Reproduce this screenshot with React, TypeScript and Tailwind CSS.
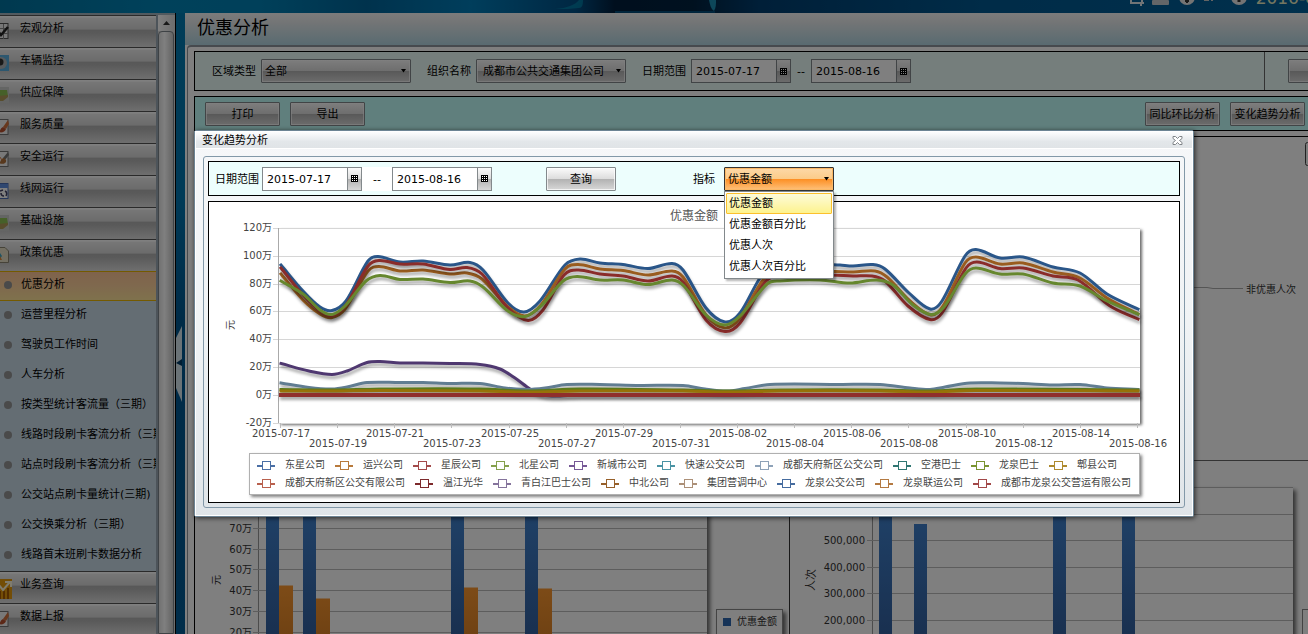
import { useState } from "react";
import type { ReactNode } from "react";

type Point = [number, number];

const CONTROL =
  "border border-[#83898c] rounded-[1px] shadow-[inset_0_0_0_1px_rgba(255,255,255,0.7)]";
const SILVER =
  "bg-[linear-gradient(to_bottom,#fbfbfb_0%,#dcdcdc_50%,#b2b2b2_51%,#d8d8d8_100%)]";

/* ---------- shared controls ---------- */

function Caret() {
  return (
    <svg className="pointer-events-none absolute right-1 top-[10px]" width="7" height="4" viewBox="0 0 7 4">
      <path d="M1 0h5L3.500 3.500z" fill="#000" />
    </svg>
  );
}

function SilverButton({ children, className = "" }: { children?: ReactNode; className?: string }) {
  return (
    <button type="button" className={`h-6 shrink-0 whitespace-nowrap pt-0.5 text-center ${CONTROL} ${SILVER} ${className}`}>
      {children}
    </button>
  );
}

function SilverSelect({ id, options, pad }: { id: string; options: string[]; pad: string }) {
  return (
    <div className="relative h-6 w-[150px] shrink-0">
      <select id={id} className={`h-full w-full appearance-none pt-0.5 ${pad} ${CONTROL} ${SILVER}`}>
        {options.map((o) => (
          <option key={o}>{o}</option>
        ))}
      </select>
      <Caret />
    </div>
  );
}

function DateField({ id, value, label }: { id: string; value: string; label: string }) {
  return (
    <div className="flex h-6 w-[100px] shrink-0 border border-[#83898c] bg-white">
      <input id={id} aria-label={label} defaultValue={value} className="w-[84px] min-w-0 bg-transparent pl-1 pt-0.5 outline-none" />
      <button
        type="button"
        aria-label="选择日期"
        className="flex flex-1 items-center justify-center border-l border-[#83898c] bg-[linear-gradient(to_bottom,#fbfbfb_0%,#dcdcdc_50%,#b2b2b2_51%,#d8d8d8_100%)]"
      >
        <svg width="7" height="7" viewBox="0 0 7 7" shapeRendering="crispEdges">
          <rect width="7" height="7" fill="#000" />
          <path d="M1 1h1v1H1zM3 1h1v1H3zM5 1h1v1H5zM1 3h1v1H1zM3 3h1v1H3zM5 3h1v1H5zM1 5h1v1H1zM3 5h1v1H3zM5 5h1v1H5z" fill="#fff" />
        </svg>
      </button>
    </div>
  );
}

/* ---------- top banner ---------- */

function Banner() {
  return (
    <header className="relative flex h-[13px] shrink-0 items-start justify-end overflow-hidden bg-[linear-gradient(to_right,#00729f_0%,#0083b6_12%,#0080b4_20%,#00659a_28%,#007cb8_36%,#004f86_44%,#001e3c_47%,#00223f_53%,#003e70_58%,#005890_75%,#00609a_100%)]">
      <svg className="absolute left-[555px] top-0" width="180" height="13" viewBox="0 0 180 13">
        <path d="M0 9C12 8 20 5 24 0h4c0 5-1 8-4 8-8 1-15 1-24 1z" fill="#0095b8" opacity=".6" />
        <path d="M154 0c1 5 2 9 5 11 2-3 2-7 2-11z" fill="#1b8fb5" />
        <path d="M60 12h100" stroke="#014a78" strokeWidth="2" />
      </svg>
      <svg className="absolute right-0 top-0" width="188" height="13" viewBox="0 0 188 13">
        <path d="M11 0v3h11M22 0v3M19 3h5M21 3v3" stroke="#e3e9ec" strokeWidth="2" fill="none" />
        <rect x="32" y="0" width="17" height="5" rx="1" fill="#c9cdd0" />
        <circle cx="67" cy="-3" r="8" fill="#e8e8e8" />
        <path d="M67 0v3M65 1h4" stroke="#333" strokeWidth="2" />
        <path d="M84 0h5M91 0h2" stroke="#c8c8c8" strokeWidth="2" />
        <circle cx="119" cy="-3" r="8" fill="#e8e8e8" />
        <path d="M119-2v4" stroke="#333" strokeWidth="3" />
      </svg>
      <span className="absolute left-[96%] top-0 -mt-[11px] whitespace-nowrap text-[17px] leading-[18px] text-[#e9edc0]">2016-08-17</span>
    </header>
  );
}

/* ---------- sidebar ---------- */

const ICONS: Record<string, ReactNode> = {
  check: (
    <>
      <rect x="-7" y=".5" width="15" height="15" fill="#eee" stroke="#555" />
      <path d="M3.500 1v15M-1 5.500h9M-1 10.500h9" stroke="#888" />
      <path d="M-3 7l4 5 7-8" stroke="#222" strokeWidth="2.500" fill="none" />
    </>
  ),
  camera: (
    <>
      <rect x="-7" width="16" height="16" fill="#5aaede" />
      <circle cx="1" cy="8" r="6" fill="#aeb4b8" />
      <circle cx="0" cy="7" r="3.500" fill="#333" />
    </>
  ),
  field: (
    <>
      <rect x="-7" width="16" height="16" fill="#c9cac8" />
      <path d="M-4 3h11l1 6-10 2z" fill="#8cc152" />
      <path d="M-4 9l12-1v2l-5 4h-7z" fill="#b09a58" />
    </>
  ),
  brush: (
    <>
      <rect x="-7" y=".5" width="15" height="15" fill="#f3f3f3" stroke="#777" />
      <path d="M8 1L3 8l3 2 3-5z" fill="#d1713c" />
      <path d="M3 8c-3 1-2 4-5 5 4 1 7 0 8-3z" fill="#b9502f" />
    </>
  ),
  paint: (
    <>
      <rect x="-7" y=".5" width="15" height="15" fill="#f3f3f3" stroke="#777" />
      <path d="M8 1L3 7l2 2 4-5z" fill="#777" />
      <path d="M4 7c-3 0-3 4-5 5 4 2 8 0 7-3z" fill="#b0713a" />
      <path d="M-3 2l5 7" stroke="#d87b3e" />
    </>
  ),
  sync: (
    <>
      <rect x="-7" y=".5" width="15" height="15" fill="#fff" stroke="#4a6cb5" />
      <path d="M-7 3h15" stroke="#5f8ee0" strokeWidth="4" />
      <path d="M0 8l3-1M5 8c2 1 2 3 1 5M1 10c0 2 1 3 3 3" stroke="#446" strokeWidth="1.500" fill="none" />
    </>
  ),
  doc: (
    <>
      <path d="M-7 .5H5L8.500 4v11.500H-7z" fill="#e6dfc4" stroke="#8c8672" />
      <path d="M-3 6h3l2 3-2 3h-3z" fill="#3fa7c4" />
      <path d="M-2 13h4l-2-4z" fill="#e08b39" />
    </>
  ),
  trend: (
    <>
      <rect x="-7" y="-1" width="19" height="21" fill="#e69a0c" />
      <path d="M0 12v8M4 12v8M8 9v11" stroke="#a85a00" strokeWidth="2" />
      <path d="M-2 5l5 6 7-8M5 3h6v5" stroke="#fff8dc" strokeWidth="2" fill="none" />
    </>
  ),
};

const GROUPS_TOP: [string, string][] = [
  ["宏观分析", "check"],
  ["车辆监控", "camera"],
  ["供应保障", "field"],
  ["服务质量", "brush"],
  ["安全运行", "paint"],
  ["线网运行", "sync"],
  ["基础设施", "field"],
  ["政策优惠", "doc"],
];
const SUB_ITEMS = [
  "优惠分析",
  "运营里程分析",
  "驾驶员工作时间",
  "人车分析",
  "按类型统计客流量（三期）",
  "线路时段刷卡客流分析（三期）",
  "站点时段刷卡客流分析（三期）",
  "公交站点刷卡量统计(三期)",
  "公交换乘分析（三期）",
  "线路首末班刷卡数据分析",
];
const GROUPS_BOTTOM: [string, string][] = [
  ["业务查询", "trend"],
  ["数据上报", "brush"],
];

function Group({ name, icon }: { name: string; icon: string }) {
  return (
    <button
      type="button"
      className="relative block h-8 w-full border-t border-[#555] bg-[linear-gradient(to_bottom,#fff_0%,#fff_3%,#ececec_8%,#d8d8d8_42%,#b0b0b0_46%,#b4b4b4_55%,#dedede_100%)] pb-1.5 pl-5 text-left"
    >
      <svg className="absolute left-0 top-[7px]" width="12" height="20" viewBox="0 0 12 20">
        {ICONS[icon]}
      </svg>
      {name}
    </button>
  );
}

function Sidebar() {
  return (
    <aside className="flex w-44 shrink-0 overflow-hidden border-r border-t border-black bg-[#a5b5be] pt-0.5">
      <nav className="w-[156px] overflow-hidden">
        {GROUPS_TOP.map(([n, i]) => (
          <Group key={n} name={n} icon={i} />
        ))}
        <ul className="bg-[#c8dae6]">
          {SUB_ITEMS.map((n, k) => (
            <li
              key={n}
              className={
                k === 0
                  ? "h-[30px] border-y border-[#e8b400] bg-[linear-gradient(to_bottom,#ffc698_0%,#ffd29c_50%,#ffe49a_100%)]"
                  : "h-[30px] border-y border-transparent"
              }
            >
              <a href="#" className="flex h-full items-center gap-[9px] whitespace-nowrap pb-0.5 pl-1">
                <span className="size-2 shrink-0 rounded-full bg-[#949494]" />
                {n}
              </a>
            </li>
          ))}
        </ul>
        {GROUPS_BOTTOM.map(([n, i]) => (
          <Group key={n} name={n} icon={i} />
        ))}
      </nav>
      <div className="flex flex-1 flex-col border-l-2 border-[#9aa8b4] bg-[#dcdcdc] pr-px">
        <button type="button" aria-label="向上滚动" className="flex h-4 shrink-0 items-center justify-center bg-[linear-gradient(to_right,#fff,#dcdcdc)]">
          <svg width="7" height="4" viewBox="0 0 7 4">
            <path d="M0 4h7L3.500 0z" fill="#333" />
          </svg>
        </button>
        <div className="flex-1 rounded-t-sm border border-[#7d858a] bg-[linear-gradient(to_right,#e4e4e4,#fff_40%,#c8c8c8)]" />
      </div>
    </aside>
  );
}

function Splitter() {
  return (
    <div className="flex w-[9px] shrink-0 flex-col bg-[linear-gradient(to_bottom,#007ab0_0%,#0074ae_30%,#00568f_50%,#005a94_100%)] pt-[314px]">
      <button type="button" aria-label="折叠菜单" className="h-[76px] w-[6px]">
        <svg width="6" height="76" viewBox="0 0 6 76">
          <path d="M6 0v76L0 62V12z" fill="#d6e6ee" />
          <path d="M6 33v7L0 37z" fill="#003a66" />
        </svg>
      </button>
    </div>
  );
}

/* ---------- background charts ---------- */

const LEFT_TICKS = ["70万", "60万", "50万", "40万", "30万", "20万"];
const LEFT_GROUPS: [number, number][] = [
  [266, 585],
  [303, 598],
  [451, 587],
  [525, 588],
];

function BarDefs() {
  return (
    <defs>
      <linearGradient id="bar-blue" x1="0" y1="500" x2="0" y2="640" gradientUnits="userSpaceOnUse">
        <stop offset="0" stopColor="#4084d2" />
        <stop offset="1" stopColor="#325f9e" />
      </linearGradient>
      <linearGradient id="bar-orange" x1="0" y1="580" x2="0" y2="640" gradientUnits="userSpaceOnUse">
        <stop offset="0" stopColor="#ff9a30" />
        <stop offset="1" stopColor="#dd8226" />
      </linearGradient>
      <filter id="soft" x="-5%" y="-5%" width="112%" height="112%">
        <feDropShadow dx="3" dy="3" stdDeviation="2" floodOpacity="0.6" />
      </filter>
    </defs>
  );
}

function AmountBarChart() {
  return (
    <svg className="shrink-0" width="594" height="180" viewBox="195 461 594 180" fontSize="10">
      <BarDefs />
      <rect x="259" y="470" width="448" height="200" fill="#fff" filter="url(#soft)" />
      <path d="M258.500 470v180" stroke="#999" />
      {LEFT_TICKS.map((t, i) => {
        const y = Math.round(528 + i * 20.700);
        return (
          <g key={t}>
            <path d={`M253 ${y + 0.500}H707`} stroke="#bbb" />
            <text x="252" y={y + 4} textAnchor="end" fill="#333">{t}</text>
          </g>
        );
      })}
      <text transform="translate(220 585) rotate(-90)" fill="#333">元</text>
      {LEFT_GROUPS.map(([x, y]) => (
        <g key={x}>
          <rect x={x} y="480" width="13" height="170" fill="url(#bar-blue)" />
          <rect x={x + 13} y={y + 0.500} width="14" height="80" fill="url(#bar-orange)" />
        </g>
      ))}
      <rect x="716.500" y="609.500" width="66" height="50" fill="#fff" stroke="#888" filter="url(#soft)" />
      <rect x="723" y="618" width="8" height="8" fill="#2c67ae" />
      <text x="737" y="625" fill="#333">优惠金额</text>
    </svg>
  );
}

function CountBarChart() {
  const ticks = ["", "600,000", "500,000", "400,000", "300,000", "200,000"];
  const bars: Point[] = [
    [879, 490],
    [914, 524],
    [1053, 490],
    [1122, 490],
  ];
  return (
    <svg className="shrink-0" width="520" height="180" viewBox="790 461 520 180" fontSize="11">
      <rect x="873" y="487" width="420" height="170" fill="#fff" filter="url(#soft)" />
      <path d="M872.500 487v160" stroke="#999" />
      {ticks.map((t, i) => {
        const y = Math.round(487 + i * 26.600);
        return (
          <g key={i}>
            <path d={`M867 ${y + 0.500}H1293`} stroke="#bbb" />
            {t && <text x="865" y={i === 1 ? y + 2 : y + 4} textAnchor="end" fill="#333" fontSize="10">{t}</text>}
          </g>
        );
      })}
      <text transform="translate(815 591) rotate(-90)" fill="#333">人次</text>
      {bars.map(([x, y]) => (
        <rect key={x} x={x} y={y} width="13" height="160" fill="url(#bar-blue)" />
      ))}
      <rect x="1302.500" y="609.500" width="66" height="50" fill="#fff" stroke="#888" />
    </svg>
  );
}

/* ---------- main page ---------- */

function MainPage() {
  return (
    <main className="flex min-w-0 flex-1 flex-col overflow-hidden bg-white">
      <h1 className="h-8 shrink-0 bg-[linear-gradient(to_bottom,#f8f8f8_0%,#e6eaec_30%,#b2d6e2_100%)] pl-3 text-[18px] leading-[29px]">
        优惠分析
      </h1>
      <div className="ml-0.5 flex min-h-0 flex-1 flex-col gap-[5px] overflow-hidden rounded-tl border-l border-t-2 border-[#8d959c] pl-[6px] pt-1">
        <form className="flex h-10 shrink-0 items-center overflow-hidden border-y border-l border-black bg-[#ebfcf8] pl-[17px]">
          <label htmlFor="area" className="mr-[5px] shrink-0 pt-0.5">区域类型</label>
          <SilverSelect id="area" pad="pl-[3px]" options={["全部"]} />
          <label htmlFor="org" className="ml-4 mr-[5px] shrink-0 pt-0.5">组织名称</label>
          <SilverSelect id="org" pad="pl-[6px]" options={["成都市公共交通集团公司"]} />
          <label htmlFor="page-from" className="ml-4 mr-[5px] shrink-0 pt-0.5">日期范围</label>
          <DateField id="page-from" label="开始日期" value="2015-07-17" />
          <span className="w-5 shrink-0 pt-0.5 text-center">--</span>
          <DateField id="page-to" label="结束日期" value="2015-08-16" />
          <div className="ml-auto h-full w-[44px] shrink-0 border-l border-[#666] pl-[23px] pt-[7px]">
            <SilverButton className="w-[75px]" />
          </div>
        </form>
        <div className="flex h-[35px] shrink-0 items-center gap-[10px] border-y border-l border-black bg-[#c0fffb] pl-[10px] pr-[3px]">
          <SilverButton className="w-[75px]">打印</SilverButton>
          <SilverButton className="w-[75px]">导出</SilverButton>
          <SilverButton className="ml-auto w-[75px]">同比环比分析</SilverButton>
          <SilverButton className="w-[75px]">变化趋势分析</SilverButton>
        </div>
        <div className="flex min-h-0 flex-1 flex-col overflow-hidden border-l border-t border-black">
          <section className="flex h-[323px] shrink-0 justify-end">
            <svg width="118" height="323" viewBox="1190 137 118 323" fontSize="10">
              <path d="M1190 287.500h17l6 1h30" stroke="#aaa" fill="none" />
              <text x="1246" y="293" fill="#333">非优惠人次</text>
              <rect x="1305.500" y="142.500" width="20" height="23" rx="2" fill="#f4f4f4" stroke="#444" />
            </svg>
          </section>
          <section className="flex min-h-0 flex-1 overflow-hidden border-t border-[#666]">
            <AmountBarChart />
            <div className="w-px shrink-0 bg-[#333]" />
            <CountBarChart />
          </section>
        </div>
      </div>
    </main>
  );
}

/* ---------- trend chart ---------- */

function smooth(points: Point[]): string {
  let d = `M${points[0][0]} ${points[0][1]}`;
  for (let i = 0; i < points.length - 1; i++) {
    const p0 = points[i - 1] ?? points[i];
    const p1 = points[i];
    const p2 = points[i + 1];
    const p3 = points[i + 2] ?? p2;
    const h = p2[0] - p1[0];
    const m1 = (p2[1] - p0[1]) / (p2[0] - p0[0]);
    const m2 = p3 === p2 ? (p2[1] - p1[1]) / h : (p3[1] - p1[1]) / (p3[0] - p1[0]);
    d += `C${p1[0] + h / 3} ${p1[1] + (m1 * h) / 3} ${p2[0] - h / 3} ${p2[1] - (m2 * h) / 3} ${p2[0]} ${p2[1]}`;
  }
  return d;
}

const SERIES: { color: string; points: Point[] }[] = [
  {
    color: "#4f3870",
    points: [[281, 363.5], [309, 371], [332, 374.5], [347, 371], [367, 362.5], [380, 361.5], [400, 363], [423, 363], [450, 363.5], [480, 364.5], [500, 369], [515, 378], [530, 389], [540, 394], [552, 396], [580, 395], [1138, 395]],
  },
  {
    color: "#617d92",
    points: [[281, 383], [309, 387.5], [332, 389], [347, 387], [367, 382.5], [400, 382.5], [423, 382.5], [450, 383.5], [480, 383.5], [505, 388], [527, 389.5], [545, 388], [567, 384.5], [600, 384.5], [640, 385.5], [683, 385.5], [705, 389], [727, 391], [745, 388.5], [770, 384.5], [840, 384.5], [880, 384.5], [910, 388], [930, 389.5], [945, 387], [970, 383], [1000, 383], [1023, 383.5], [1053, 385], [1080, 384.5], [1107, 388], [1138, 389.5]],
  },
  {
    color: "#5c7a1c",
    points: [[281, 389.5], [332, 390], [380, 389], [480, 389], [527, 391], [580, 389], [683, 390], [727, 391], [780, 390], [880, 390], [930, 391], [976, 389], [1138, 390]],
  },
  {
    color: "#967208",
    points: [[281, 391], [332, 391], [380, 390.5], [480, 391], [527, 392], [580, 391], [683, 391], [727, 392], [780, 391], [880, 391], [930, 392], [976, 390.5], [1138, 391]],
  },
  {
    color: "#902f2c",
    points: [[281, 395], [700, 395], [1138, 395]],
  },
  {
    color: "#2a5689",
    points: [[281, 265], [303, 291], [320, 307], [332, 310.5], [346, 301], [368, 261], [378, 256.5], [400, 262], [423, 261], [450, 265], [470, 262.5], [483, 270], [508, 303], [524, 312], [540, 301], [565, 265], [580, 259], [600, 263], [623, 264.5], [648, 268.5], [672, 263.5], [683, 270], [706, 308], [725, 322], [740, 313], [760, 278], [774, 264], [790, 262], [840, 265], [853, 266], [873, 264.5], [885, 269], [909, 293], [930, 309], [942, 301], [965, 256], [976, 249.5], [1000, 258], [1023, 257], [1053, 267], [1080, 273], [1107, 294], [1138, 309]],
  },
  {
    color: "#995c1f",
    points: [[281, 274], [303, 300], [320, 314], [332, 317.5], [345, 309], [368, 271], [379, 266.5], [400, 271], [423, 270], [450, 274], [467, 273], [482, 279], [508, 307], [525, 316], [541, 305], [565, 269], [578, 264.5], [600, 269], [623, 270.5], [648, 275], [672, 271], [683, 277], [706, 315], [725, 328], [740, 318], [763, 280], [778, 271], [800, 270], [853, 272], [875, 271], [887, 277], [909, 300], [931, 315], [943, 306], [965, 263], [976, 257], [1000, 264], [1023, 263], [1053, 272], [1080, 278], [1107, 298], [1138, 314]],
  },
  {
    color: "#8a2c2a",
    points: [[281, 268], [303, 295], [320, 311], [332, 315.5], [346, 305], [368, 266], [379, 260.5], [400, 264], [423, 264], [450, 269.5], [467, 267.5], [482, 274], [507, 307], [528, 320.5], [543, 310], [564, 275], [578, 270], [600, 274], [623, 276], [648, 281], [672, 276], [683, 282], [706, 320], [725, 331.5], [740, 323], [765, 282], [780, 275], [800, 274], [853, 276], [872, 276], [885, 281], [908, 306], [930, 319.5], [942, 313], [966, 268], [977, 262], [1000, 268.5], [1023, 268], [1053, 276], [1078, 280], [1110, 306], [1138, 319]],
  },
  {
    color: "#66872e",
    points: [[281, 281], [303, 294], [320, 310], [332, 314.5], [345, 306], [366, 281], [380, 275.5], [400, 279.5], [423, 279], [450, 282.5], [470, 281], [483, 287], [508, 311], [525, 316.5], [541, 306], [563, 281], [577, 276.5], [600, 280], [623, 280], [648, 284.5], [672, 280], [684, 286], [706, 315], [725, 325], [740, 316], [767, 284], [780, 281], [820, 280], [850, 283], [877, 280], [893, 285], [913, 305], [931, 314.5], [944, 307], [965, 274], [976, 268], [1000, 274], [1023, 274], [1053, 283], [1080, 286], [1107, 301], [1138, 314]],
  },
];

const DATES = ["07-17", "07-19", "07-21", "07-23", "07-25", "07-27", "07-29", "07-31", "08-02", "08-04", "08-06", "08-08", "08-10", "08-12", "08-14", "08-16"];

function TrendChart() {
  return (
    <svg className="block w-full" viewBox="209 202 970 248" fontSize="10" fill="#444" role="img" aria-label="优惠金额">
      <defs>
        <filter id="plot-shadow" x="-2%" y="-5%" width="104%" height="110%">
          <feDropShadow dx="2" dy="2" stdDeviation="1.500" floodOpacity="0.6" />
        </filter>
        <filter id="line-shadow" x="0" y="200" width="1300" height="250" filterUnits="userSpaceOnUse" colorInterpolationFilters="sRGB">
          <feDropShadow dx="1" dy="3" stdDeviation="1.800" floodOpacity="0.35" />
        </filter>
      </defs>
      <rect x="279" y="228" width="861" height="195" fill="#fff" filter="url(#plot-shadow)" />
      <text x="670" y="220" fontSize="12" fill="#555">优惠金额</text>
      {[120, 100, 80, 60, 40, 20, 0, -20].map((v, i) => {
        const y = Math.round(228 + i * 27.800);
        return (
          <g key={v}>
            <path d={`M273 ${y + 0.500}H1140`} stroke="#d6d6d6" />
            <text x="272" y={y + 3} textAnchor="end">{v}万</text>
          </g>
        );
      })}
      <path d="M278.500 228v195" stroke="#aaa" />
      <text transform="translate(234 330) rotate(-90)">元</text>
      {DATES.map((d, i) => {
        const x = Math.round(281 + i * 57.130);
        return (
          <g key={d}>
            <path d={`M${x - 0.500} 423v5`} stroke="#bbb" />
            <text x={x} y={i % 2 ? 447 : 437} textAnchor="middle">2015-{d}</text>
          </g>
        );
      })}
      {SERIES.map((s) => (
        <path
          key={s.color}
          d={smooth(s.points)}
          stroke={s.color}
          strokeWidth={s.color === "#902f2c" ? 4 : 3}
          strokeLinecap="square"
          fill="none"
          filter="url(#line-shadow)"
        />
      ))}
    </svg>
  );
}

const LEGEND: [string, string][][] = [
  [
    ["东星公司", "#4a6fa5"],
    ["运兴公司", "#b87a3c"],
    ["星辰公司", "#a34a4a"],
    ["北星公司", "#85a04c"],
    ["新城市公司", "#765896"],
    ["快速公交公司", "#4a93a4"],
    ["成都天府新区公交公司", "#8ea2b8"],
    ["空港巴士", "#2f7672"],
    ["龙泉巴士", "#7a9430"],
    ["郫县公司", "#ae8a2e"],
  ],
  [
    ["成都天府新区公交有限公司", "#b9614e"],
    ["温江光华", "#7d2a2c"],
    ["青白江巴士公司", "#85749c"],
    ["中北公司", "#97602a"],
    ["集团营调中心", "#ac9078"],
    ["龙泉公交公司", "#466c9f"],
    ["龙泉联运公司", "#b47a42"],
    ["成都市龙泉公交营运有限公司", "#a24848"],
  ],
];

function Legend() {
  return (
    <div className="ml-10 mr-[39px] mt-[3px] overflow-hidden border border-[#b0b0b0] bg-white py-0.5 pl-[7px] text-[10px] text-[#444] shadow-[2px_2px_3px_rgba(0,0,0,0.5)]">
      {LEGEND.map((row, r) => (
        <ul key={r} className="flex h-[18px] items-center gap-[10px]">
          {row.map(([name, color]) => (
            <li key={name} className="flex items-center gap-[10px] whitespace-nowrap">
              <svg width="18" height="10" viewBox="0 0 18 10">
                <path d="M0 6h18" stroke={color} strokeWidth="2" />
                <rect x="5.500" y="1.500" width="8" height="8" fill="#fff" stroke={color} />
              </svg>
              {name}
            </li>
          ))}
        </ul>
      ))}
    </div>
  );
}

/* ---------- dialog ---------- */

const METRICS = ["优惠金额", "优惠金额百分比", "优惠人次", "优惠人次百分比"];

function MetricSelect() {
  const [metric, setMetric] = useState(METRICS[0]);
  const [open, setOpen] = useState(true);
  return (
    <div className="relative h-6 w-[110px] shrink-0">
      <select
        id="metric"
        value={metric}
        onChange={(e) => setMetric(e.target.value)}
        onMouseDown={(e) => {
          e.preventDefault();
          setOpen(!open);
        }}
        className="h-full w-full appearance-none rounded-[1px] border border-[#333] bg-[linear-gradient(to_bottom,#fdd9a8_0%,#fccb88_50%,#fd8f24_51%,#fec27c_100%)] pl-[3px] pt-0.5 shadow-[inset_0_0_0_1px_#fbb865] outline-none"
      >
        {METRICS.map((m) => (
          <option key={m}>{m}</option>
        ))}
      </select>
      <Caret />
      {open && (
        <ul className="absolute inset-x-0 top-6 z-10 border border-[#83898c] bg-white px-px pb-px pt-px shadow-[2px_2px_2px_rgba(0,0,0,0.3)]" role="listbox" aria-label="指标">
          {METRICS.map((m) => (
            <li
              key={m}
              role="option"
              aria-selected={m === metric}
              onClick={() => {
                setMetric(m);
                setOpen(false);
              }}
              className={
                m === metric
                  ? "h-[21px] rounded-[1px] border border-[#fcc02c] bg-[linear-gradient(to_bottom,#fdfbda,#fdf38e)] pl-0.5 leading-5"
                  : "h-[21px] border border-transparent pl-0.5 leading-5"
              }
            >
              {m}
            </li>
          ))}
        </ul>
      )}
    </div>
  );
}

function TrendDialog() {
  return (
    <section
      role="dialog"
      aria-labelledby="dialog-title"
      className="absolute left-[194px] right-[114px] top-[130px] rounded-[2px] border border-[#6d8494] bg-[linear-gradient(to_bottom,#f6f7f9_0%,#f0f3f5_50%,#dfe4e8_100%)] shadow-[1px_1px_5px_rgba(0,0,0,0.7)]"
    >
      <div className="border border-white">
        <header className="flex h-[17px] items-center justify-between border-b border-white bg-[linear-gradient(to_bottom,#fdfdfe_0%,#e3e7ea_60%,#e0e4e7_100%)] pl-[6px] pr-[9px]">
          <h2 id="dialog-title" className="pt-0.5">变化趋势分析</h2>
          <button type="button" aria-label="关闭">
            <svg width="11" height="9" viewBox="0 0 11 9">
              <path d="M1 .5h2.500l2 2 2-2H10v2L7.500 4.500 10 6.500v2H7.500l-2-2-2 2H1v-2l2.500-2L1 2.500z" fill="#fff" stroke="#808488" />
            </svg>
          </button>
        </header>
        <div className="m-[7px] flex flex-col gap-[5px] rounded-[3px] border border-[#8298a8] p-1">
          <form className="flex h-[35px] items-center border border-black bg-[#edfefd] pl-[6px]">
            <label htmlFor="dialog-from" className="mr-[3px] shrink-0 pt-0.5">日期范围</label>
            <DateField id="dialog-from" label="开始日期" value="2015-07-17" />
            <span className="flex h-6 w-[30px] shrink-0 items-center justify-center bg-white pt-0.5">--</span>
            <DateField id="dialog-to" label="结束日期" value="2015-08-16" />
            <SilverButton className="ml-[54px] w-[70px]">查询</SilverButton>
            <label htmlFor="metric" className="ml-[77px] mr-[9px] shrink-0 pt-0.5">指标</label>
            <MetricSelect />
          </form>
          <div className="border border-black bg-white pb-[7px]">
            <TrendChart />
            <Legend />
          </div>
        </div>
      </div>
    </section>
  );
}

export default function App() {
  return (
    <div className="relative flex h-screen flex-col overflow-hidden bg-[#00609a] font-['DejaVu_Sans','Noto_Sans_CJK_SC',sans-serif] text-[11px] leading-4 text-black">
      <Banner />
      <div className="-mt-px flex min-h-0 flex-1">
        <Sidebar />
        <Splitter />
        <div className="flex min-w-0 flex-1 pt-px">
          <MainPage />
        </div>
      </div>
      <div className="absolute inset-0 bg-black/50" />
      <TrendDialog />
    </div>
  );
}
